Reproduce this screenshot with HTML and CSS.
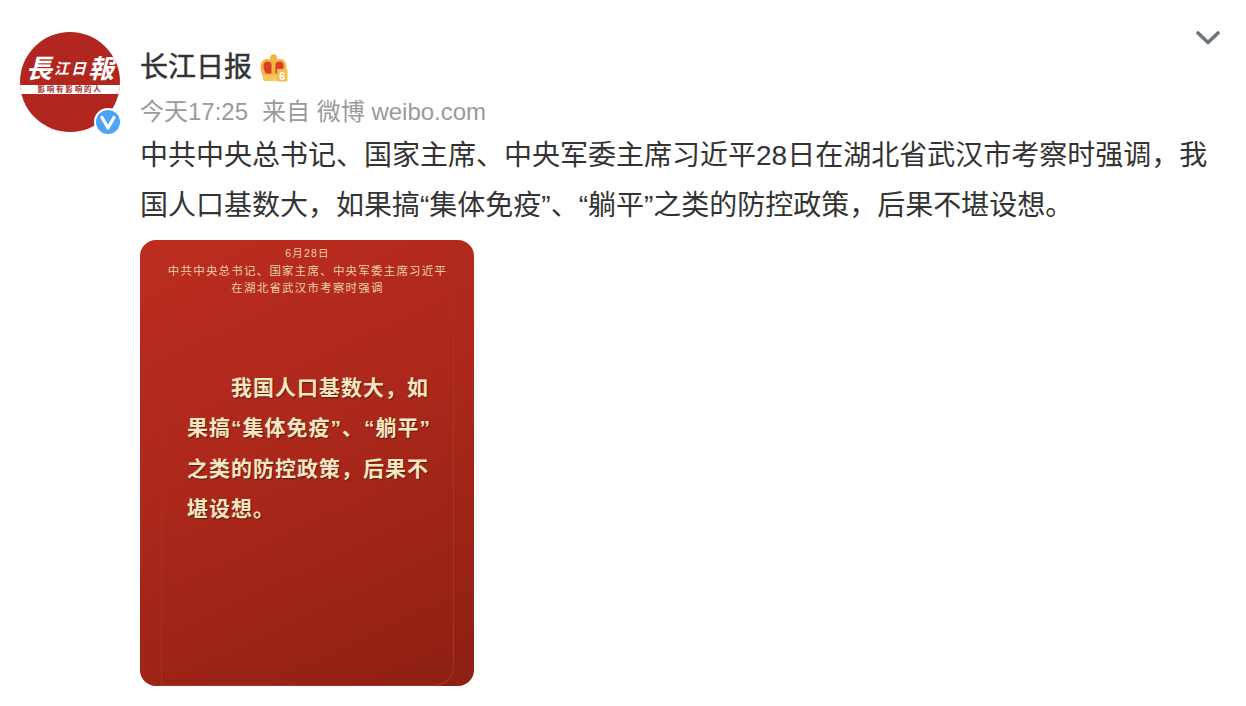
FILE: index.html
```html
<!DOCTYPE html>
<html lang="zh-CN">
<head>
    <meta charset="UTF-8">
    <meta name="viewport" content="width=device-width, initial-scale=1.0">
    <title>长江日报</title>
    <link rel="stylesheet" href="styles.css">
</head>
<body>
    <div class="post">
        <div class="avatar-wrap">
            <div class="avatar">
                <div class="avatar-title"><span class="big">長</span><span>江</span><span>日</span><span class="big">報</span></div>
                <div class="avatar-band">影响有影响的人</div>
            </div>
            <svg class="verified" viewBox="0 0 28 28">
                <circle cx="14" cy="14" r="14" fill="#fff"/>
                <circle cx="14" cy="14" r="12" fill="#4da3f5"/>
                <path d="M8 9.5 L14 20 L20 9.5" fill="none" stroke="#fff" stroke-width="3.2" stroke-linejoin="round" stroke-linecap="round"/>
            </svg>
        </div>
        <div class="content">
            <div class="name-row">
                <span class="name">长江日报</span>
                <svg class="crown" viewBox="0 0 28 28">
                    <circle cx="13.500" cy="3.800" r="3.500" fill="#f2b544"/>
                    <path d="M4 25 C-1 16 -1 6 6.500 5 C9.500 4.600 12 5.500 13.500 7 C15 5.500 17.500 4.600 20.500 5 C28 6 28 16 23 25 Z" fill="#f2b544"/>
                    <path d="M6 19.500 C2.500 14 2.500 8 7 7.500 C9.500 7.300 11.500 8.500 11.500 10.500 L11.500 19.500 Z" fill="#d8402a"/>
                    <path d="M21 19.500 C24.500 14 24.500 8 20 7.500 C17.500 7.300 15.500 8.500 15.500 10.500 L15.500 19.500 Z" fill="#d8402a"/>
                    <rect x="3" y="21" width="21" height="6" rx="2" fill="#f7c65c"/>
                    <rect x="17" y="15" width="10.500" height="12.500" rx="1" fill="#f5bd4e"/>
                    <text x="22.200" y="25.800" class="crown-level">6</text>
                </svg>
            </div>
            <div class="meta">今天17:25<span class="source">来自 微博 weibo.com</span></div>
            <p class="text">中共中央总书记、国家主席、中央军委主席习近平28日在湖北省武汉市考察时强调，我国人口基数大，如果搞“集体免疫”、“躺平”之类的防控政策，后果不堪设想。</p>
            <div class="poster">
                <div class="poster-inner">
                    <div class="poster-head">
                        <div class="poster-date">6月28日</div>
                        <div>中共中央总书记、国家主席、中央军委主席习近平</div>
                        <div>在湖北省武汉市考察时强调</div>
                    </div>
                    <p class="poster-quote">我国人口基数大，如果搞“集体免疫”、“躺平”之类的防控政策，后果不堪设想。</p>
                </div>
            </div>
        </div>
        <svg class="more" viewBox="0 0 26 16">
            <path d="M3 3 L13 12.500 L23 3" fill="none" stroke="#6e747d" stroke-width="3.6" stroke-linecap="round" stroke-linejoin="round"/>
        </svg>
    </div>
</body>
</html>
```

FILE: styles.css
```css
body {
    margin: 0;
    background: #fff;
    font-family: "Liberation Sans", "Noto Sans CJK SC", sans-serif;
    color: #333;
}
.post {
    position: relative;
    display: flex;
    gap: 20px;
    padding: 32px 20px 20px;
}
.avatar-wrap {
    position: relative;
    flex: none;
    width: 100px;
    height: 100px;
}
.avatar {
    width: 100px;
    height: 100px;
    border-radius: 50%;
    overflow: hidden;
    background: #b1261f;
    display: flex;
    flex-direction: column;
}
.avatar-title {
    height: 53px;
    box-sizing: border-box;
    padding: 20px 6px 0 6px;
    display: flex;
    justify-content: space-between;
    align-items: center;
    color: #fff;
    font-size: 15px;
    line-height: 30px;
    font-weight: 700;
    font-style: italic;
}
.avatar-title .big {
    font-size: 26px;
}
.avatar-band {
    height: 9px;
    background: #fff;
    color: #a92a22;
    font-size: 7.500px;
    line-height: 9px;
    font-weight: 700;
    letter-spacing: 1.800px;
    text-align: center;
}
.verified {
    position: absolute;
    right: -2px;
    bottom: -4px;
    width: 28px;
    height: 28px;
}
.content {
    flex: 1;
    min-width: 0;
}
.name-row {
    display: flex;
    align-items: center;
    gap: 8px;
    height: 36px;
    padding-top: 18px;
}
.name {
    font-size: 28px;
    line-height: 36px;
    -webkit-text-stroke: 0.5px #333;
}
.crown {
    width: 28px;
    height: 28px;
}
.crown-level {
    fill: #fff;
    font-size: 11px;
    font-weight: 700;
    text-anchor: middle;
}
.meta {
    margin-top: 11px;
    font-size: 24px;
    line-height: 30px;
    color: #9a9a9a;
}
.source {
    margin-left: 14px;
}
.text {
    margin: 4px 0 9px;
    font-size: 28px;
    line-height: 50px;
}
.poster {
    width: 334px;
    height: 446px;
    border-radius: 16px;
    overflow: hidden;
    background: linear-gradient(155deg, #bc2d1f 0%, #ac281b 45%, #8d2013 100%);
}
.poster-inner {
    box-sizing: border-box;
    width: 293px;
    height: 100%;
    margin-left: 21px;
    border-left: 1px solid #a83222;
    border-right: 1px solid #a8351f;
    border-bottom: 1px solid #a8351f;
    border-bottom-right-radius: 20px;
}
.poster-head {
    padding-top: 5px;
    color: #eccfa8;
    font-size: 11.500px;
    line-height: 17.500px;
    letter-spacing: 1.200px;
    text-align: center;
}
.poster-date {
    font-size: 10.500px;
}
.poster-quote {
    margin: 70px 0 0 25px;
    width: 250px;
    color: #f6e7c4;
    font-size: 21px;
    font-weight: 700;
    line-height: 40.500px;
    letter-spacing: 1px;
    text-indent: 44px;
    text-shadow: 1px 1px 1px #5e1a0c;
}
.more {
    position: absolute;
    top: 30px;
    right: 25px;
    width: 26px;
    height: 16px;
}
```
